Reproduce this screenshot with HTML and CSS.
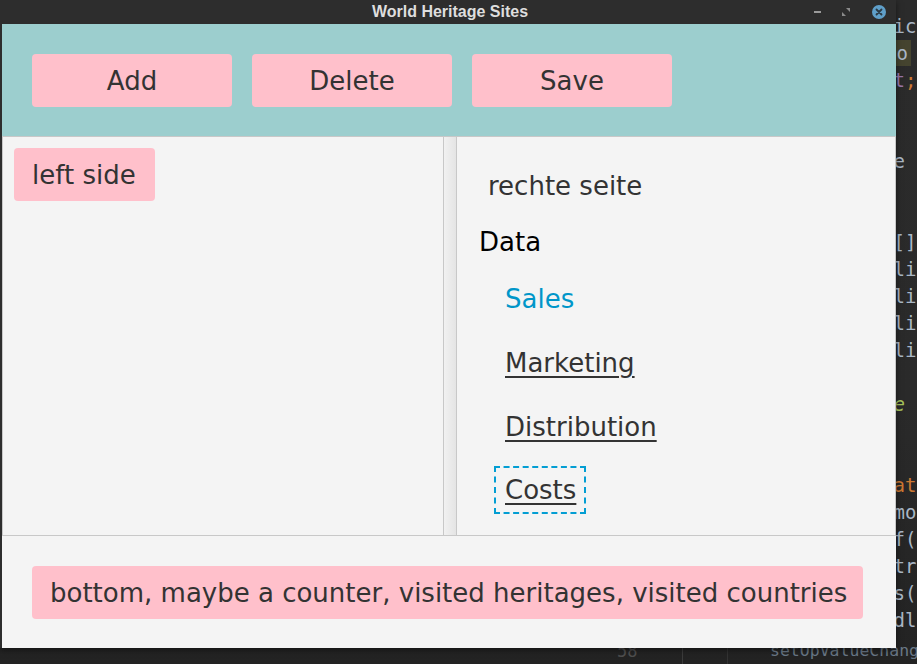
FILE: index.html
```html
<!DOCTYPE html>
<html>
<head>
<meta charset="utf-8">
<title>World Heritage Sites</title>
<link rel="stylesheet" href="styles.css">
</head>
<body>
<div class="desktop">
  <div class="editor">
    <div class="gutter-line">58</div>
    <div class="vline v1"></div>
    <div class="vline v2"></div>
    <div class="code">
      <div class="cl">lic</div>
      <div class="cl"><span class="hl">mo</span></div>
      <div class="cl"><span class="purple">st</span><span class="orange">;</span></div>
      <div class="cl"></div>
      <div class="cl"></div>
      <div class="cl">Te</div>
      <div class="cl"></div>
      <div class="cl"></div>
      <div class="cl"><span class="hl2">s</span>[]</div>
      <div class="cl">rli</div>
      <div class="cl">rli</div>
      <div class="cl">rli</div>
      <div class="cl">rli</div>
      <div class="cl"></div>
      <div class="cl green">re</div>
      <div class="cl"></div>
      <div class="cl"></div>
      <div class="cl orange">cat</div>
      <div class="cl"> mo</div>
      <div class="cl">Lf(</div>
      <div class="cl">ntr</div>
      <div class="cl">Ls(</div>
      <div class="cl">ndl</div>
    </div>
    <div class="bottom-code">setOpValueChang</div>
  </div>

  <div class="window">
    <div class="titlebar">
      <span class="title">World Heritage Sites</span>
      <div class="controls">
        <span class="min"></span>
        <svg class="restore" width="8" height="8" viewBox="0 0 8 8"><path d="M4 0H8V4Z M0 4V8H4Z" fill="#8a8a8a"/></svg>
        <span class="close">
          <svg width="14" height="14" viewBox="0 0 14 14"><path d="M4.5 4.5L9.5 9.5M9.5 4.5L4.5 9.5" stroke="#2b3a44" stroke-width="1.8" stroke-linecap="round"/></svg>
        </span>
      </div>
    </div>
    <div class="app">
      <div class="toolbar">
        <div class="btn">Add</div>
        <div class="btn">Delete</div>
        <div class="btn">Save</div>
      </div>
      <div class="split">
        <div class="pane left">
          <div class="chip">left side</div>
        </div>
        <div class="divider"></div>
        <div class="pane right">
          <div class="rlabel">rechte seite</div>
          <div class="data">Data</div>
          <div class="links">
            <a class="link sales">Sales</a>
            <a class="link">Marketing</a>
            <a class="link">Distribution</a>
            <a class="link focused">Costs</a>
          </div>
        </div>
      </div>
      <div class="bottom">
        <div class="chip wide">bottom, maybe a counter, visited heritages, visited countries</div>
      </div>
    </div>
  </div>
</div>
</body>
</html>
```

FILE: styles.css
```css
* { box-sizing: border-box; }
html, body { margin: 0; padding: 0; }
body {
  width: 917px;
  height: 664px;
  overflow: hidden;
  background: #262626;
  font-family: "DejaVu Sans", sans-serif;
}
.desktop {
  position: relative;
  width: 917px;
  height: 664px;
  overflow: hidden;
  background: linear-gradient(180deg, #2b2b2b 0%, #2a2a2a 60%, #232323 100%);
}
.editor {
  position: absolute;
  left: 0; top: 0;
  width: 917px; height: 664px;
  font-family: "DejaVu Sans Mono", monospace;
  font-size: 19px;
  color: #a9b7c6;
}
.code {
  position: absolute;
  left: 882px;
  top: 13px;
  width: 40px;
}
.cl { height: 27px; line-height: 27px; white-space: pre; }
.hl { background: #45442f; padding: 2px 3px; }
.hl2 { background: #4b3f30; color: #9876aa; }
.purple { color: #9876aa; }
.orange { color: #cc7832; }
.green { color: #a5c25c; font-style: italic; }
.bottom-code {
  position: absolute;
  left: 770px;
  top: 641px;
  line-height: 20px;
  color: #6a7988;
  font-size: 16.5px;
  white-space: pre;
}
.gutter-line {
  position: absolute;
  left: 617px;
  top: 641px;
  line-height: 20px;
  color: #4f4f4f;
  font-size: 17px;
}
.vline {
  position: absolute;
  top: 640px;
  width: 1px;
  height: 24px;
  background: #3c3c3c;
}
.v1 { left: 682px; }
.v2 { left: 727px; background: #333; }
.window {
  position: absolute;
  left: 0; top: 0;
  width: 896px;
  height: 648px;
  display: flex;
  flex-direction: column;
  background: #2d2d2d;
  box-shadow: 0 2px 6px rgba(0,0,0,0.5);
}
.titlebar {
  height: 24px;
  flex: none;
  position: relative;
  display: flex;
  align-items: center;
  justify-content: center;
  background: #2d2d2d;
}
.title {
  color: #dedede;
  font-family: "Liberation Sans", sans-serif;
  font-weight: bold;
  font-size: 16px;
  margin-left: 4px;
}
.controls {
  position: absolute;
  right: 10px;
  top: 3px;
  display: flex;
  align-items: center;
  height: 18px;
}
.min {
  width: 7px; height: 2px;
  background: #9a9a9a;
  margin-right: 21px;
}
.restore { margin-right: 22px; }
.close {
  width: 14px; height: 14px;
  border-radius: 50%;
  background: #5f9fc9;
  display: flex;
}
.app {
  flex: 1;
  margin-left: 2px;
  display: flex;
  flex-direction: column;
  background: #f4f4f4;
}
.toolbar {
  height: 113px;
  flex: none;
  background: #9ccece;
  display: flex;
  gap: 20px;
  padding: 30px 0 0 30px;
  border-bottom: 1px solid #c8c8c8;
}
.btn {
  width: 200px;
  height: 53px;
  background: #ffc0cb;
  border-radius: 4px;
  color: #333;
  font-size: 26px;
  display: flex;
  align-items: center;
  justify-content: center;
}
.split {
  height: 399px;
  flex: none;
  display: flex;
  border-bottom: 1px solid #c8c8c8;
  border-left: 1px solid #c8c8c8;
  border-right: 1px solid #c8c8c8;
}
.pane { background: #f4f4f4; }
.pane.left {
  width: 440px;
  padding: 11px 0 0 11px;
}
.divider {
  width: 14px;
  flex: none;
  border-left: 1px solid #c8c8c8;
  border-right: 1px solid #c8c8c8;
  background: linear-gradient(90deg, #f1f1f1 0%, #e4e4e4 100%);
}
.pane.right {
  flex: 1;
  padding: 34px 0 0 22px;
  display: flex;
  flex-direction: column;
  align-items: flex-start;
}
.chip {
  display: inline-flex;
  align-items: center;
  height: 53px;
  padding: 0 19px 0 18px;
  background: #ffc0cb;
  border-radius: 4px;
  color: #333;
  font-size: 26px;
  white-space: nowrap;
}
.chip.wide {
  width: 831px;
  padding: 0 10px 0 18px;
  overflow: hidden;
}
.rlabel {
  margin-left: 9px;
  height: 30px;
  line-height: 30px;
  font-size: 26px;
  color: #333;
}
.data {
  margin-top: 26px;
  height: 30px;
  line-height: 30px;
  font-size: 26px;
  color: #000;
}
.links {
  margin-top: 19px;
  margin-left: 15px;
  display: flex;
  flex-direction: column;
  align-items: flex-start;
  gap: 18px;
}
.link {
  height: 46px;
  line-height: 44px;
  padding: 0 9px 0 10px;
  border: 1px dashed transparent;
  font-size: 26px;
  color: #333;
  text-decoration: underline;
  text-decoration-thickness: 2px;
  text-underline-offset: 4px;
}
.link.sales { color: #0096c9; text-decoration: none; }
.link.focused {
  border: 2px dashed #039ed3;
  height: 48px;
  line-height: 44px;
  margin-top: -2px;
  padding: 0 8px 0 9px;
}
.bottom {
  flex: 1;
  padding: 30px 0 0 30px;
}
```
